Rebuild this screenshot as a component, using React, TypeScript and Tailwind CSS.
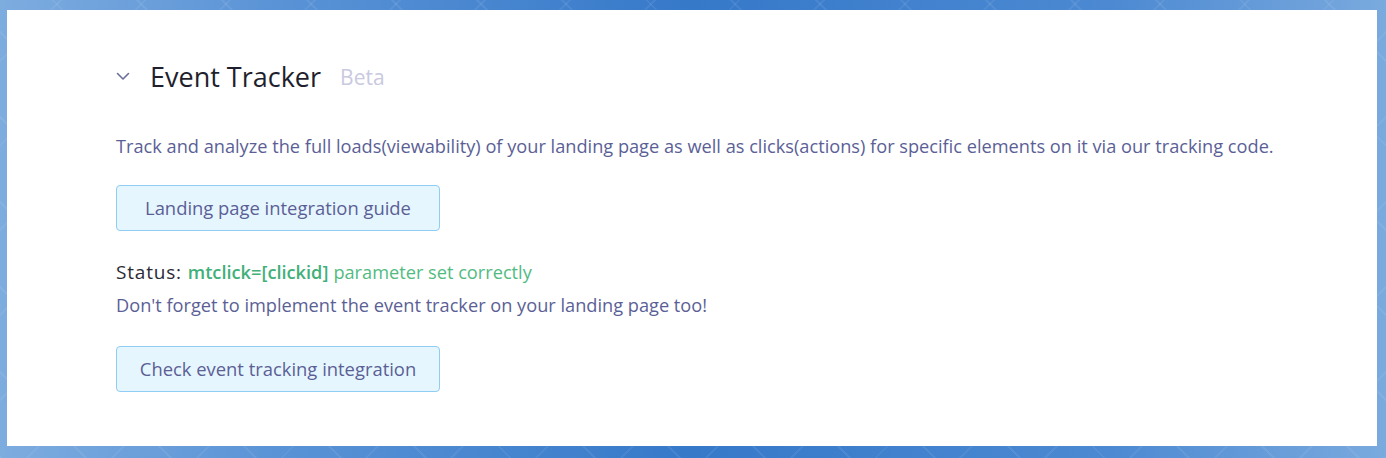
import React from "react"

function Chevron() {
  return (
    <svg width="14" height="9" viewBox="0 0 14 9" fill="none" className="text-[#6b6d9a]">
      <path d="M1.5 1.5 L7 7 L12.5 1.5" stroke="currentColor" strokeWidth="1.6" strokeLinecap="round" strokeLinejoin="round" />
    </svg>
  )
}

export default function App() {
  return (
    <div
      className="w-[1386px] h-[458px] pt-[10px] pl-[7px] pr-[9px] pb-[12px] bg-[repeating-linear-gradient(45deg,rgba(255,255,255,0.07)_0px,rgba(255,255,255,0.07)_2px,transparent_2px,transparent_60px),repeating-linear-gradient(-45deg,rgba(255,255,255,0.06)_0px,rgba(255,255,255,0.06)_2px,transparent_2px,transparent_60px),linear-gradient(90deg,#7dacdf_0%,#5a93d6_20%,#3679c9_50%,#4c89d2_80%,#7aaade_100%)]"
      style={{ fontFamily: '"Open Sans", "Noto Sans", sans-serif' }}
    >
      <div className="h-full bg-white pl-[109px] pt-[50px]">
        <div className="flex items-center h-[32px]">
          <Chevron />
          <h2 className="ml-[20px] text-[27px] text-[#1f1f2e] leading-none">Event Tracker</h2>
          <span className="ml-[19px] text-[21px] text-[#c9c9e0] leading-none mt-[3px]">Beta</span>
        </div>

        <p className="mt-[40px] text-[18.2px] leading-[28px] text-[#5b5f96]">
          Track and analyze the full loads(viewability) of your landing page as well as clicks(actions) for specific elements on it via our tracking code.
        </p>

        <button className="mt-[25px] h-[46px] w-[324px] rounded-[4px] border border-[#8fcdf4] bg-[#e6f6fe] text-[18.4px] text-[#5b5f96]">
          Landing page integration guide
        </button>

        <div className="mt-[25px] text-[18.2px] leading-[33px]">
          <div className="flex items-baseline">
            <span className="text-[19px] font-medium tracking-[0.8px] text-[#2a2a35]">Status:</span>
            <span className="ml-[6px] font-semibold text-[#41b079]">mtclick=[clickid]</span>
            <span className="ml-[5px] text-[#52bb82]">parameter set correctly</span>
          </div>
          <div className="text-[#5b5f96]">Don't forget to implement the event tracker on your landing page too!</div>
        </div>

        <button className="mt-[24px] h-[46px] w-[324px] rounded-[4px] border border-[#8fcdf4] bg-[#e6f6fe] text-[18.4px] text-[#5b5f96]">
          Check event tracking integration
        </button>
      </div>
    </div>
  )
}
